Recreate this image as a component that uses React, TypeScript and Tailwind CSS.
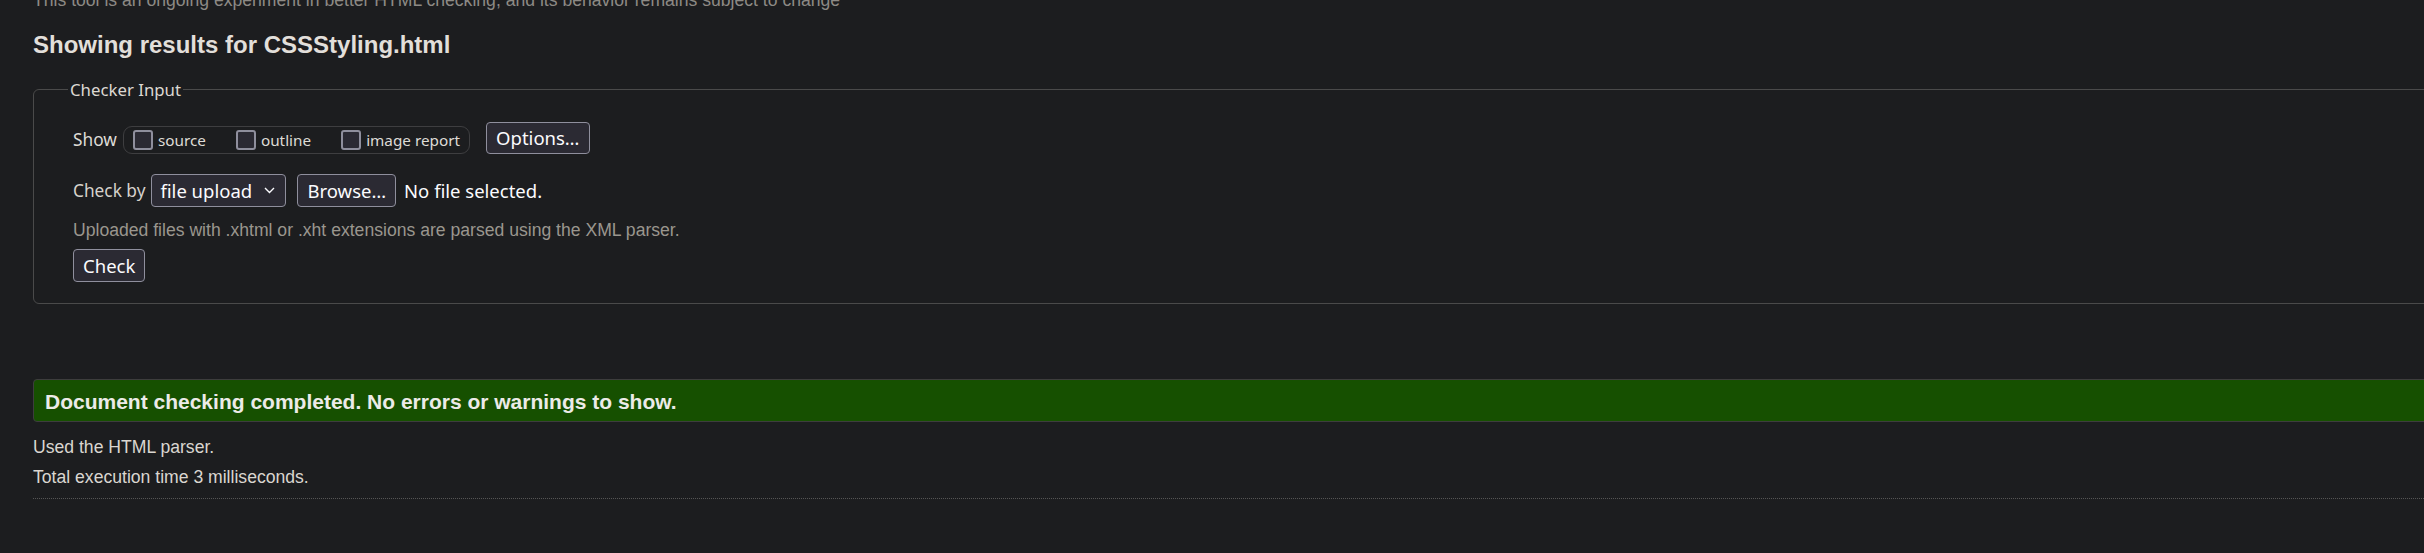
import React from 'react';

const ctrl =
  "flex h-[33px] items-center rounded-[4px] border border-[#8f8f9d] bg-[#2b2a33] px-[9px] text-[18.5px] text-[#fbfbfe] font-['Noto_Sans',sans-serif]";

function Box({ label }: { label: string }) {
  return (
    <label className="flex items-center gap-[5px]">
      <span className="h-[20px] w-[20px] rounded-[3px] border-2 border-[#8f8f9d] bg-[#2b2a33]" />
      <span>{label}</span>
    </label>
  );
}

export default function App() {
  return (
    <div className="h-[553px] w-[2424px] overflow-hidden bg-[#1c1d1f] font-['Liberation_Sans',Arial,sans-serif] text-[#dedbd6]">
      <div className="w-[2560px] pl-[33px]">
        <p className="-mt-[11px] text-[17.6px] leading-[23px] text-[#8d8a85]">
          This tool is an ongoing experiment in better HTML checking, and its behavior remains subject to change
        </p>
        <h2 className="mt-[18px] text-[24px] font-bold leading-[29px] text-[#e2dfda]">
          Showing results for CSSStyling.html
        </h2>

        <fieldset className="mt-[19px] rounded-[6px] border border-[#4a4a4a] px-[39px] pb-[21px] font-['Noto_Sans',sans-serif]">
          <legend className="-ml-[5px] px-[2px] text-[16.8px] leading-[23px] text-[#dcd8d2]">Checker Input</legend>

          <div className="mt-[21px] flex items-end">
            <span className="text-[17.3px] leading-[28px]">Show</span>
            <div className="ml-[6px] flex h-[28px] items-center gap-[30px] rounded-[9px] border border-[#3e3e40] px-[9px] text-[15.3px] text-[#dedbd6]">
              <Box label="source" />
              <Box label="outline" />
              <Box label="image report" />
            </div>
            <button className={ctrl + ' ml-[16px] !h-[32px]'}>Options…</button>
          </div>

          <div className="mt-[20px] flex items-center">
            <span className="text-[17.3px] leading-[33px] text-[#d6d2cc]">Check by</span>
            <div className={ctrl + ' ml-[6px] w-[135px] justify-between !pl-[8px] !pr-[10px]'}>
              <span>file upload</span>
              <svg width="11" height="7" viewBox="0 0 11 7" fill="none" stroke="#fbfbfe" strokeWidth="1.4">
                <path d="M1 1l4.5 4.5L10 1" />
              </svg>
            </div>
            <button className={ctrl + ' ml-[11px]'}>Browse…</button>
            <span className="ml-[8px] text-[18.5px] text-[#fbfbfe]">No file selected.</span>
          </div>

          <p className="mt-[11.5px] font-['Liberation_Sans',Arial,sans-serif] text-[17.6px] leading-[23px] text-[#9a968e]">
            Uploaded files with .xhtml or .xht extensions are parsed using the XML parser.
          </p>

          <div className="mt-[7.5px] flex">
            <button className={ctrl}>Check</button>
          </div>
        </fieldset>

        <div className="mt-[75px] flex h-[43px] items-center rounded-[4px] border border-[#3d3d3d] bg-[#165000] pl-[11px] pt-[2px] text-[21px] font-bold text-[#ecebe8]">
          Document checking completed. No errors or warnings to show.
        </div>

        <div className="mt-[10px] text-[17.6px] leading-[30px] text-[#dad6d0]">
          <p>Used the HTML parser.</p>
          <p>Total execution time 3 milliseconds.</p>
        </div>
        <div className="mt-[6px] border-t border-dotted border-[#555555]" />
      </div>
    </div>
  );
}
